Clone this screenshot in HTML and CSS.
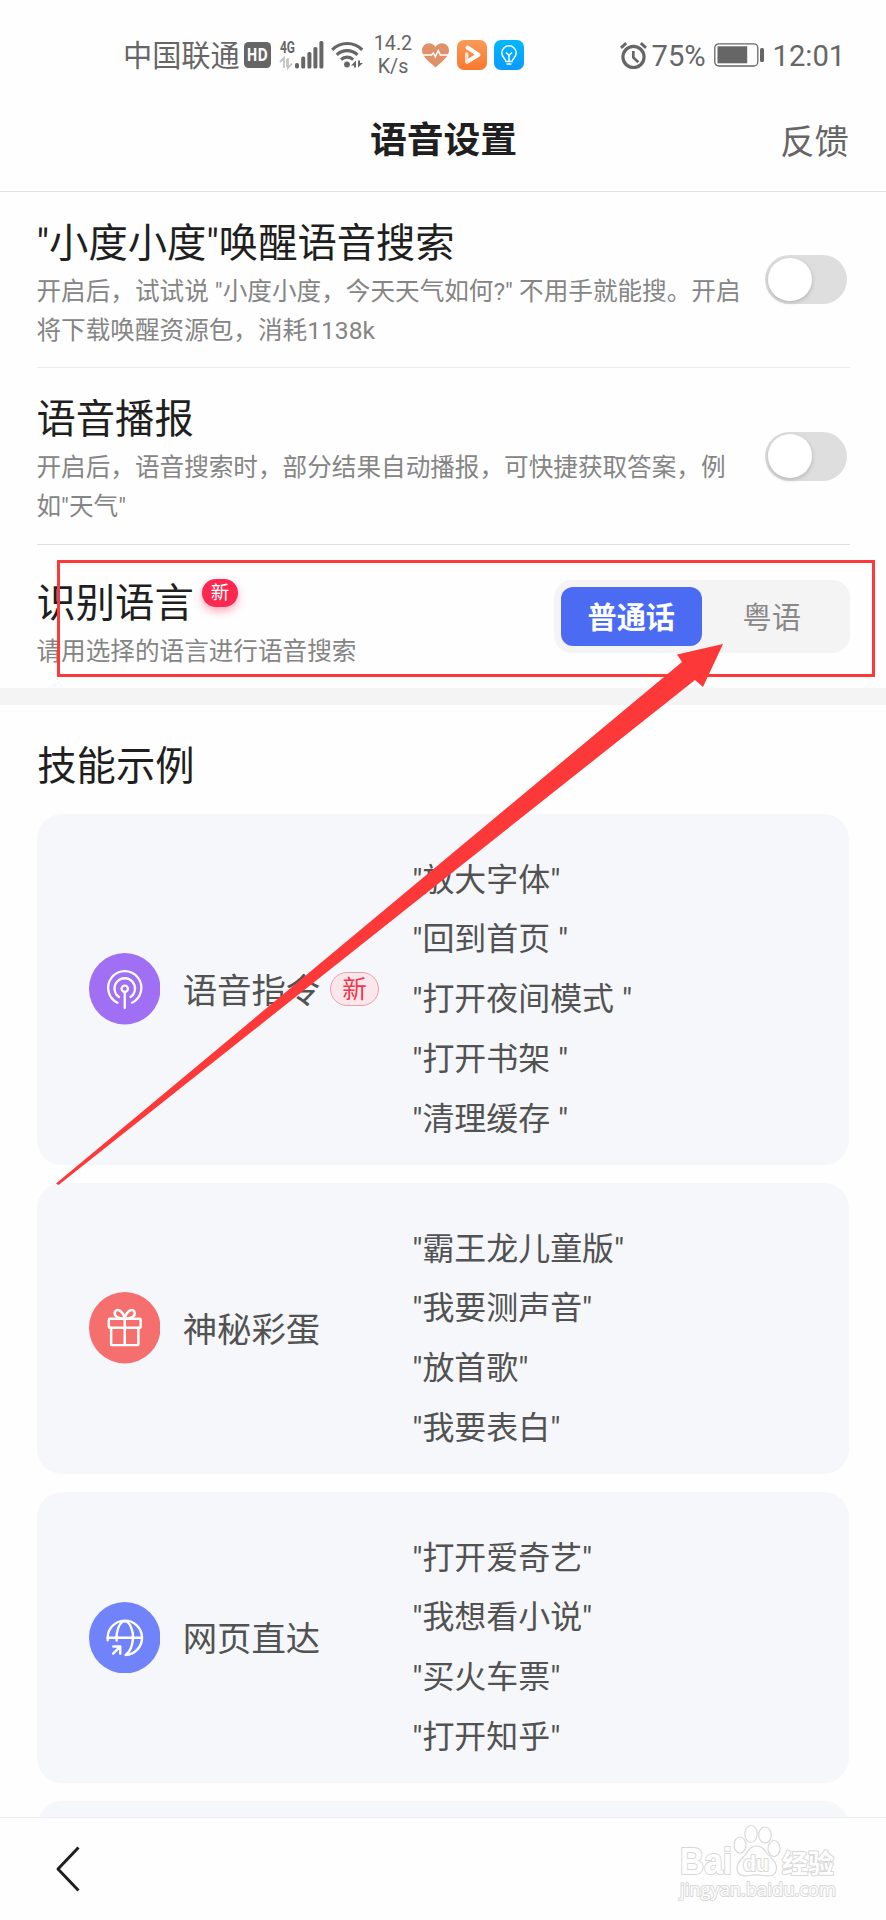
FILE: index.html
```html
<!DOCTYPE html>
<html lang="zh-CN">
<head>
<meta charset="utf-8">
<title>语音设置</title>
<link rel="stylesheet" href="styles.css">
</head>
<body>
<div class="screen">
  <div class="status">
    <span class="carrier">中国联通</span>
    <svg class="hd" viewBox="0 0 27 26"><rect width="27" height="26" rx="4.5" fill="#666"/><text x="2.8" y="19.2" textLength="21" lengthAdjust="spacingAndGlyphs" class="hd-text">HD</text></svg>
    <svg class="signal" viewBox="0 0 44 30">
      <text x="0" y="13" textLength="15" lengthAdjust="spacingAndGlyphs" class="g-text">4G</text>
      <path d="M0 22l4-4v10M8 18v10l4-4.5M7 19v8" fill="none" stroke="#c4c4c4" stroke-width="1.8"/>
      <g fill="#666"><rect x="15" y="23" width="4" height="5.5" rx="1.8"/><rect x="21.2" y="16.5" width="4" height="12" rx="1.6"/><rect x="27.4" y="12" width="4" height="16.5" rx="1.6"/><rect x="33.4" y="7" width="4" height="21.5" rx="1.6"/><rect x="39.4" y="1" width="4" height="27.5" rx="1.6"/></g>
    </svg>
    <svg class="wifi" viewBox="0 0 33 30">
      <g fill="none" stroke="#666" stroke-width="3.2"><path d="M1.2 9.8a21 21 0 0 1 30 0"/><path d="M5.8 14.8a14.8 14.8 0 0 1 20.6 0"/><path d="M10 19.6a9 9 0 0 1 12.2 0"/></g>
      <circle cx="16" cy="24.5" r="2.9" fill="#666"/><path d="M20 25.5l5-5v7h-2v-2zM27 20.5v7l5-4.5h-3v-2.500z" fill="#666"/>
    </svg>
    <span class="speed">14.2<br>K/s</span>
    <svg class="heart" viewBox="0 0 27 25"><path d="M13.500 24.500C10 21 0 14.500 0 7.500 0 0 9.500-2.500 13.500 4 17.500-2.500 27 0 27 7.500 27 14.500 17 21 13.500 24.500z" fill="#e0916b"/><path d="M1 12h8.500l1.800-2 2 3.800 3-6.300 2 4.500H26" fill="none" stroke="#fff" stroke-width="1.500"/></svg>
    <svg class="app" viewBox="0 0 30 30"><defs><linearGradient id="og" x2="0" y2="1"><stop stop-color="#f99a58"/><stop offset="1" stop-color="#f97830"/></linearGradient></defs><rect width="30" height="30" rx="7" fill="url(#og)"/><path d="M10.500 7.500L21.500 14.800 10.500 21.500" fill="none" stroke="#fff" stroke-width="4" stroke-linejoin="round" stroke-linecap="round"/><path d="M9.700 14v8" stroke="#ffe0cc" stroke-width="3.500" stroke-linecap="round"/></svg>
    <svg class="app" viewBox="0 0 30 30"><defs><linearGradient id="bg" x2="0" y2="1"><stop stop-color="#00b9fb"/><stop offset="1" stop-color="#0a9aff"/></linearGradient></defs><rect width="30" height="30" rx="7" fill="url(#bg)"/><g fill="none" stroke="#fff" stroke-width="1.500"><path d="M12 21.500c0-3-4.200-3.500-4.200-8.500a7.200 7.200 0 0 1 14.400 0c0 5-4.200 5.500-4.200 8.500z"/><path d="M15 21v-6M12 12.500l3 2.800 3-2.800M12.500 24h5"/></g></svg>
    <svg class="alarm" viewBox="0 0 27 27"><g fill="none" stroke="#666"><circle cx="13.500" cy="15" r="10.600" stroke-width="3.200"/><path d="M13.300 9v6.500l5 4.800" stroke-width="2.700"/><path d="M1 5.800L6.200 1.200M20.800 1.200L26 5.800" stroke-width="2.900"/></g></svg>
    <span class="percent">75%</span>
    <svg class="battery" viewBox="0 0 50 24"><rect x=".8" y=".8" width="43" height="22.200" rx="4" fill="none" stroke="#666" stroke-width="1.300"/><rect x="3.500" y="3.300" width="29.700" height="17" fill="#666"/><rect x="46" y="5" width="4" height="14" rx="1.500" fill="#666"/></svg>
    <span class="clock">12:01</span>
  </div>

  <header class="nav"><h1>语音设置</h1><a class="feedback">反馈</a></header>

  <main class="content">
    <section class="settings">
      <div class="row">
        <div class="info"><h2>"小度小度"唤醒语音搜索</h2><p>开启后，试试说 "小度小度，今天天气如何?" 不用手就能搜。开启<br>将下载唤醒资源包，消耗1138k</p></div>
        <div class="toggle"><i></i></div>
      </div>
      <div class="row second">
        <div class="info"><h2>语音播报</h2><p>开启后，语音搜索时，部分结果自动播报，可快捷获取答案，例<br>如"天气"</p></div>
        <div class="toggle"><i></i></div>
      </div>
      <div class="row language">
        <div class="info"><h2>识别语言<span class="new">新</span></h2><p>请用选择的语言进行语音搜索</p></div>
        <div class="segment"><span class="active">普通话</span><span>粤语</span></div>
      </div>
    </section>
    <section class="skills">
      <h2>技能示例</h2>
      <div class="card">
        <svg class="icon" viewBox="0 0 72 72"><circle cx="36" cy="36" r="36" fill="#a06ff3"/><g fill="none" stroke="#fff" stroke-width="2.300" stroke-linecap="round"><path d="M28.700 50A16.700 16.700 0 1 1 43.300 50"/><path d="M30.300 44.300A10.300 10.300 0 1 1 41.700 44.300"/><circle cx="36" cy="36" r="3.200"/><path d="M36 39.200V55.500"/></g></svg>
        <div class="label">语音指令<span class="tag">新</span></div>
        <ul><li>"放大字体"</li><li>"回到首页 "</li><li>"打开夜间模式 "</li><li>"打开书架 "</li><li>"清理缓存 "</li></ul>
      </div>
      <div class="card">
        <svg class="icon" viewBox="0 0 72 72"><circle cx="36" cy="36" r="36" fill="#f66f6f"/><g fill="none" stroke="#fff" stroke-width="2.500" stroke-linejoin="round" stroke-linecap="round"><rect x="20" y="27" width="32" height="9" rx="1"/><path d="M22.300 36v16.500q0 1 1 1h25.400q1 0 1-1V36M36 27v26.500"/><path d="M36 27c-6 0-11-2.500-10-6.500 1.200-4.800 8-2.500 10 6.500zM36 27c6 0 11-2.500 10-6.500-1.200-4.800-8-2.500-10 6.500z"/></g></svg>
        <div class="label">神秘彩蛋</div>
        <ul><li>"霸王龙儿童版"</li><li>"我要测声音"</li><li>"放首歌"</li><li>"我要表白"</li></ul>
      </div>
      <div class="card">
        <svg class="icon" viewBox="0 0 72 72"><circle cx="36" cy="36" r="36" fill="#7083fa"/><g fill="none" stroke="#fff" stroke-width="2.400" stroke-linecap="round" stroke-linejoin="round"><path d="M18.800 38.500V36A17.300 17.300 0 1 1 37 53.300"/><path d="M18.800 36h34.400M27.800 38.800C27 30 30.500 19.500 36 19.500S45 30 44.300 37C43.600 45 41 50.500 37 53.300"/><path d="M24.500 44.800h7V52M31.300 45l-7 7"/></g></svg>
        <div class="label">网页直达</div>
        <ul><li>"打开爱奇艺"</li><li>"我想看小说"</li><li>"买火车票"</li><li>"打开知乎"</li></ul>
      </div>
      <div class="card"></div>
    </section>
  </main>

  <footer class="footer"><svg class="back" viewBox="0 0 26 46"><path d="M23.500 1.500L3 23l20.500 21.500" fill="none" stroke="#1f1f1f" stroke-width="3" stroke-linejoin="round"/></svg></footer>

  <svg class="watermark" viewBox="0 0 170 90">
    <g class="mark">
      <text x="3" y="54" textLength="52" lengthAdjust="spacingAndGlyphs" class="brand">Bai</text>
      <ellipse cx="63" cy="25" rx="6" ry="8"/><ellipse cx="74" cy="14" rx="6.200" ry="8.500"/><ellipse cx="88" cy="15" rx="6.300" ry="8"/><ellipse cx="97" cy="28.500" rx="6" ry="8"/>
      <path d="M79.500 26c6 0 8 4 11 8 4 5 9 7 9 13.500 0 9-7 9-13 8-5-.800-9-.800-14 0-6 1-13 0-12.500-8 .3-6 5-8.500 8.500-13 3-4 5-8.500 11-8.500z"/>
      <text x="66" y="50.500" textLength="26" lengthAdjust="spacingAndGlyphs" class="du">du</text>
      <text x="105" y="52.500" textLength="52" lengthAdjust="spacingAndGlyphs" class="zh">经验</text>
      <text x="3" y="75.500" textLength="156" lengthAdjust="spacingAndGlyphs" class="url">jingyan.baidu.com</text>
    </g>
  </svg>

  <svg class="annotation" viewBox="0 0 886 1920"><rect x="58.500" y="561.500" width="815" height="114" fill="none" stroke="#fc3838" stroke-width="3"/><path d="M723 644L703 687 695 680 58.500 1185 56 1183.500 682 662 677 654.500z" fill="#fc3838"/></svg>
</div>
</body>
</html>
```
FILE: styles.css
```css
* { box-sizing: border-box; margin: 0; padding: 0; }
body { background: #fefefe; font-family: Roboto, "Noto Sans CJK SC", sans-serif; }
svg { display: block; flex: none; }
.screen { position: relative; display: flex; flex-direction: column; width: 886px; height: 1920px; overflow: hidden; }

.status { display: flex; align-items: center; flex: none; height: 88px; padding: 22px 0 0 123px; color: #666; font-size: 29.2px; line-height: 36px; white-space: nowrap; }
.carrier { width: 121px; padding-top: 1px; }
.hd { width: 27px; height: 26px; margin-right: 8.500px; }
.hd-text { fill: #fff; font: bold 17px "Open Sans", sans-serif; }
.g-text { fill: #666; font: bold 16.500px Roboto, sans-serif; }
.signal { width: 44px; height: 30px; margin-right: 7.500px; overflow: visible; }
.wifi { width: 33px; height: 30px; margin-right: 8.500px; }
.speed { width: 41px; margin-right: 8px; padding-top: 1.500px; font-size: 19.700px; line-height: 22.500px; text-align: center; }
.heart { width: 27px; height: 25px; margin-right: 8px; }
.app { width: 30px; height: 30px; margin-right: 7px; }
.alarm { width: 27px; height: 27px; margin-left: 89px; }
.percent { width: 62px; margin-left: 5px; padding-top: 1px; }
.battery { width: 50px; height: 24px; }
.clock { margin-left: 9px; padding-top: 1px; }

.nav { display: grid; grid-template-columns: 1fr auto 1fr; align-items: center; flex: none; height: 104px; padding: 3px 37px 0 38px; border-bottom: 1px solid #e2e2e2; }
.nav h1 { grid-column: 2; color: #1f1f1f; font-size: 36.800px; font-weight: 700; line-height: 44px; }
.feedback { justify-self: end; padding-top: 1px; color: #666; font-size: 34.400px; line-height: 44px; }

.content { flex: 1; min-height: 0; overflow: hidden; }
h2 { color: #1f1f1f; font-size: 39.300px; font-weight: 400; line-height: 48px; }
.settings { padding: 0 36.500px; border-bottom: 17px solid #f4f4f4; }
.row { display: flex; align-items: center; justify-content: space-between; height: 176px; border-bottom: 1px solid #eee; }
.info { align-self: flex-start; padding-top: 28px; }
.info p { margin-top: 4px; color: #858585; font-size: 24.620px; line-height: 39px; white-space: nowrap; }
.second { height: 177px; border-color: #e0e0e0; }
.language { height: 143.300px; border: 0; }
.language .info { padding-top: 34.500px; }
.language h2 { display: flex; }
.new { height: 28px; margin: -1px 0 0 8px; padding: 0 9px; border-radius: 14px; background: #fd2850; box-shadow: 0 4px 8px #fd285066; color: #fff; font-size: 18.500px; line-height: 29px; }
.toggle { width: 82px; height: 49px; margin-right: 2.500px; padding: 2.700px 3px; border-radius: 25px; background: #dedede; }
.toggle i { display: block; width: 43.500px; height: 43.500px; border-radius: 50%; background: #fff; box-shadow: 0 1.500px 4px #0003; }
.segment { display: flex; width: 296px; height: 73.500px; padding: 7.500px; border-radius: 18px; background: #f4f4f4; color: #888; font-size: 29.200px; line-height: 62px; text-align: center; }
.segment span { flex: 1; height: 58.500px; }
.segment .active { border-radius: 12px; background: #4b6cf2; color: #fff; font-weight: 700; }

.skills { padding: 38px 36.700px 0 37.300px; }
.skills h2 { margin-bottom: 22.300px; }
.card { display: flex; align-items: center; min-height: 60px; margin-bottom: 17.700px; padding: 26px 0 26px 51.400px; border-radius: 25px; background: #f5f7fb; }
.icon { width: 71.500px; height: 71.500px; }
.label { display: flex; align-items: center; width: 229.500px; margin: 4px 0 0 22.500px; color: #525252; font-size: 34.400px; line-height: 44px; }
.tag { height: 34.500px; margin: -4px 0 0 10px; padding: 0 11px; border: 1.500px solid #eba0ac; border-radius: 18px; background: #fbe6eb; color: #f0354b; font-size: 24.500px; line-height: 33px; }
ul { list-style: none; color: #525252; font-size: 31.950px; white-space: pre; }
li { height: 59.850px; padding-top: 19px; line-height: 42.500px; }

.footer { display: flex; align-items: center; flex: none; height: 103.500px; padding-left: 55px; border-top: 1.500px solid #ededed; }
.back { width: 26px; height: 46px; }

.watermark { position: absolute; left: 677px; top: 1820px; width: 170px; height: 90px; }
.mark { fill: #fefefe; stroke: #d8d8d8; stroke-width: 1.200px; }
.mark text { paint-order: stroke; stroke-width: 2px; stroke-linejoin: round; }
.brand { font: bold 36px "Liberation Sans", sans-serif; }
.du { font: bold 22px "Liberation Sans", sans-serif; }
.zh { font: bold 26px "Noto Sans CJK SC", sans-serif; }
.url { font: 18.500px "Open Sans", sans-serif; }
.annotation { position: absolute; left: 0; top: 0; width: 886px; height: 1920px; }
```
